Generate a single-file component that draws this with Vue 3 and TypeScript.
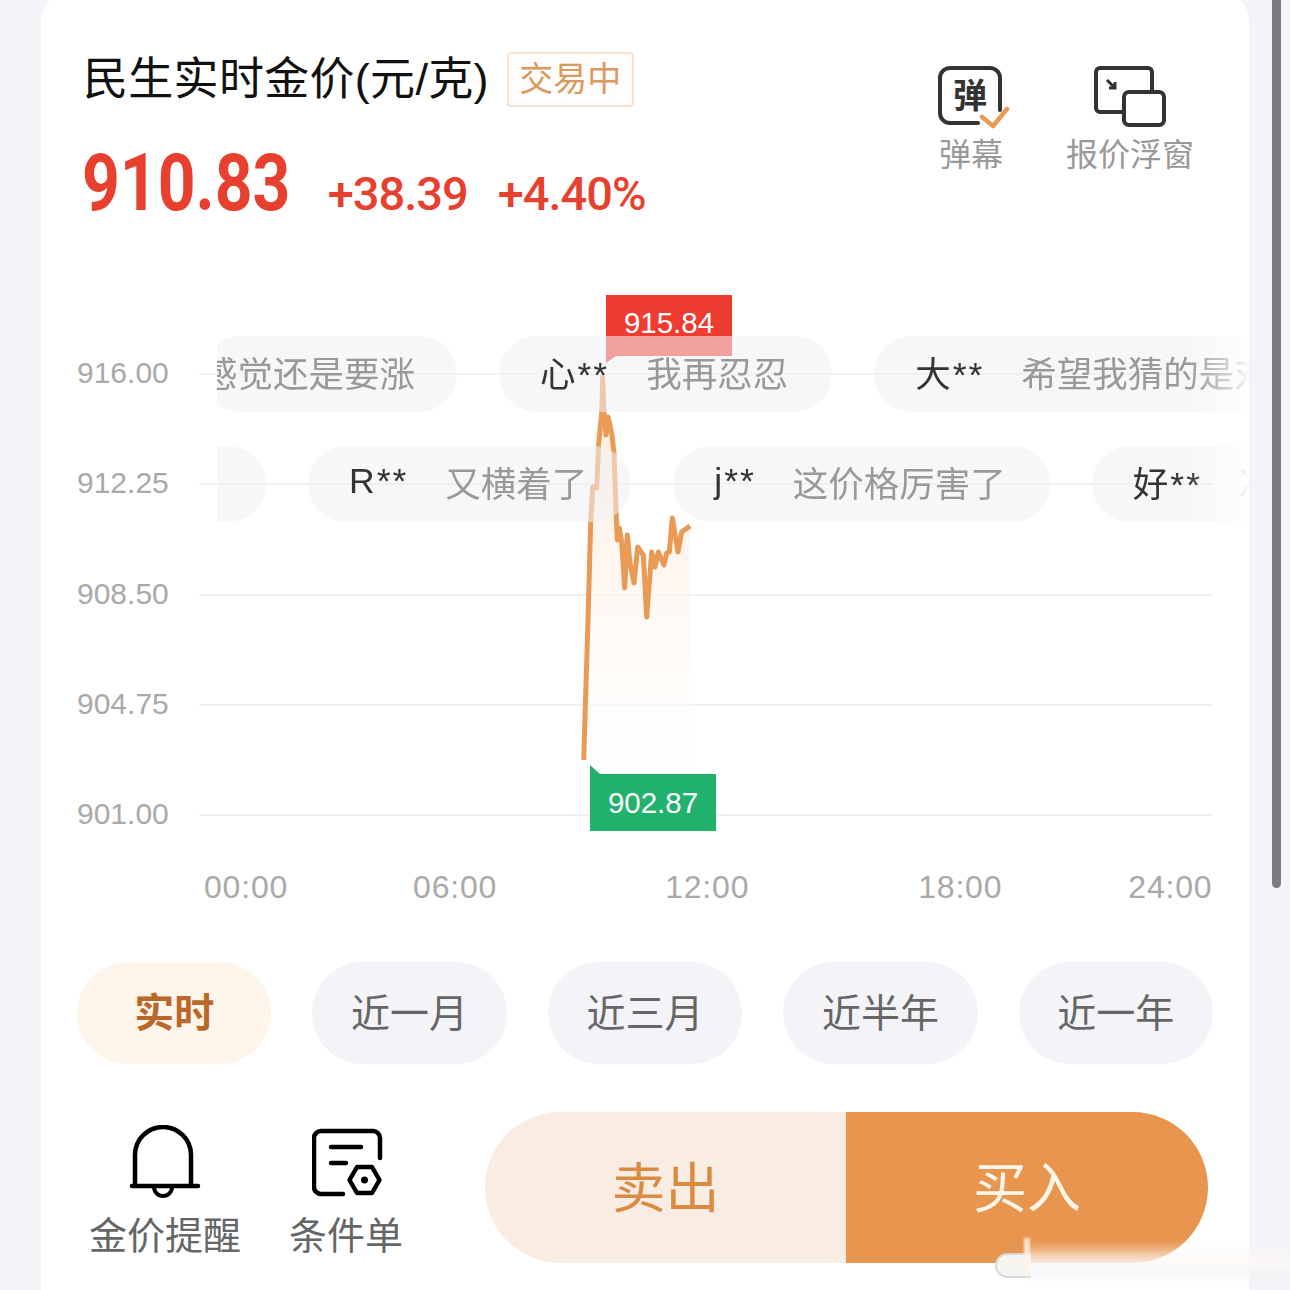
<template>
  <div class="page">
    <main class="card">
      <header class="header">
        <div class="header__left">
          <div class="title-row">
            <h1 class="title">民生实时金价(元/克)</h1>
            <span class="status">交易中</span>
          </div>
          <div class="price-row">
            <span class="price">910.83</span>
            <span class="delta delta--first">+38.39</span>
            <span class="delta">+4.40%</span>
          </div>
        </div>
        <div class="tools">
          <div class="tool tool--danmaku">
            <svg class="tool__icon" width="72" height="64" viewBox="0 0 72 64" fill="none">
              <path d="M40 57H12a10 10 0 0 1-10-10V12A10 10 0 0 1 12 2h40a10 10 0 0 1 10 10v32" stroke="#333" stroke-width="4" stroke-linecap="round" />
              <text x="32" y="42" text-anchor="middle" class="tool__glyph">弹</text>
              <path d="M44 51l11 9 14-17" stroke="#e99a55" stroke-width="4.5" stroke-linecap="round" stroke-linejoin="round" />
            </svg>
            <span class="tool__label">弹幕</span>
          </div>
          <div class="tool">
            <svg class="tool__icon" width="72" height="64" viewBox="0 0 72 64" fill="none">
              <path d="M28 46H6a4 4 0 0 1-4-4V6a4 4 0 0 1 4-4h48a4 4 0 0 1 4 4v20" stroke="#333" stroke-width="4" />
              <rect x="30" y="26" width="40" height="33" rx="5" stroke="#333" stroke-width="4" />
              <path d="M13 14l8 8M21 16v6h-6" stroke="#333" stroke-width="3" />
            </svg>
            <span class="tool__label">报价浮窗</span>
          </div>
        </div>
      </header>

      <section class="chart">
        <div v-for="label in yLabels" :key="label" class="chart__row">
          <span class="chart__label">{{ label }}</span>
          <span class="chart__line"></span>
        </div>

        <svg class="chart__plot" width="1208" height="600" viewBox="41 279 1208 600" fill="none">
          <defs>
            <linearGradient id="priceFill" x1="0" y1="0" x2="0" y2="1">
              <stop offset="0" stop-color="#fdeadb" />
              <stop offset="1" stop-color="#ffffff" stop-opacity="0.3" />
            </linearGradient>
          </defs>
          <polygon :points="areaPoints" fill="url(#priceFill)" />
          <polyline :points="linePoints" stroke="#e99a55" stroke-width="5" stroke-linejoin="round" />
        </svg>

        <span class="price-tag price-tag--high">915.84</span>
        <span class="price-tag price-tag--low">902.87</span>

        <div class="danmaku">
          <div v-for="(row, i) in danmakuRows" :key="i" class="danmaku__row" :style="{ marginLeft: row.offset + 'px' }">
            <div
              v-for="(item, j) in row.items"
              :key="j"
              class="danmaku__pill"
              :style="item.width ? { width: item.width + 'px' } : undefined"
            >
              <span v-if="item.name" class="danmaku__name">{{ item.name }}</span>
              <span v-if="item.text" class="danmaku__text">{{ item.text }}</span>
            </div>
          </div>
        </div>
      </section>

      <div class="x-axis">
        <span v-for="tick in xTicks" :key="tick" class="x-axis__tick">{{ tick }}</span>
      </div>

      <nav class="ranges">
        <button
          v-for="(range, i) in ranges"
          :key="range"
          class="ranges__item"
          :class="{ 'ranges__item--active': i === 0 }"
          type="button"
        >{{ range }}</button>
      </nav>

      <footer class="actions">
        <div class="action action--alert">
          <svg width="72" height="76" viewBox="0 0 72 76" fill="none">
            <path d="M6 60V30a28 28 0 0 1 56 0v30" stroke="#000" stroke-width="4.5" />
            <path d="M3 61h66" stroke="#000" stroke-width="4.5" stroke-linecap="round" />
            <path d="M25 62a9 9 0 0 0 18 0" stroke="#000" stroke-width="4" />
          </svg>
          <span class="action__label">金价提醒</span>
        </div>
        <div class="action action--order">
          <svg width="72" height="72" viewBox="0 0 72 72" fill="none">
            <path d="M31 66H9a7 7 0 0 1-7-7V10a7 7 0 0 1 7-7h52a7 7 0 0 1 7 7v20" stroke="#000" stroke-width="4.5" stroke-linecap="round" />
            <path d="M19 19h30M19 35h15" stroke="#000" stroke-width="4.5" stroke-linecap="round" />
            <path d="M37.500 52l7.500-13h15l7.500 13-7.500 13h-15z" stroke="#000" stroke-width="4.5" stroke-linejoin="round" />
            <circle cx="52.500" cy="52" r="3.500" fill="#000" />
          </svg>
          <span class="action__label">条件单</span>
        </div>
        <div class="trade">
          <button class="trade__btn trade__btn--sell" type="button">卖出</button>
          <button class="trade__btn trade__btn--buy" type="button">买入</button>
        </div>
      </footer>
    </main>

    <div class="scrollbar"></div>
    <div class="watermark">
      <span class="watermark__ring"></span>
      <span class="watermark__stick"></span>
      <span class="watermark__blur"></span>
    </div>
  </div>
</template>

<script setup lang="ts">
interface DanmakuItem {
  name?: string
  text?: string
  width?: number
}

const yLabels = ['916.00', '912.25', '908.50', '904.75', '901.00']
const xTicks = ['00:00', '06:00', '12:00', '18:00', '24:00']
const ranges = ['实时', '近一月', '近三月', '近半年', '近一年']

const danmakuRows: { offset: number; items: DanmakuItem[] }[] = [
  {
    offset: -15,
    items: [
      { text: '感觉还是要涨' },
      { name: '心**', text: '我再忍忍' },
      { name: '大**', text: '希望我猜的是对的呀' },
    ],
  },
  {
    offset: -51,
    items: [
      { width: 100 },
      { name: 'R**', text: '又横着了' },
      { name: 'j**', text: '这价格厉害了' },
      { name: '好**', text: '冲冲冲' },
    ],
  },
]

const line: [number, number][] = [
  [583.7, 760], [588, 620], [590.7, 523], [592.7, 487], [596.7, 488], [598.7, 443],
  [601.7, 413], [602.7, 377], [604, 413], [606, 435], [608, 417], [611.7, 433],
  [614, 453], [616, 510], [617.3, 540], [619.3, 528], [621.7, 542], [624.7, 588],
  [627.3, 535], [630, 563], [634, 583], [637.7, 547], [643.3, 555], [646.7, 617],
  [651.7, 552], [655, 567], [658.3, 552], [664, 565], [666.7, 553], [669.3, 552],
  [672.3, 518], [678, 552], [681.7, 532], [690, 526],
]

const linePoints = line.map(([x, y]) => `${x},${y}`).join(' ')
const areaPoints = `${linePoints} 690,815 583.7,815`
</script>

<style>
html,
body {
  margin: 0;
  background: #f3f3f8;
}
</style>

<style scoped>
.page {
  position: relative;
  width: 1290px;
  height: 1290px;
  overflow: hidden;
  background: #f3f3f8;
  font-family: "Liberation Sans", "Noto Sans CJK SC", sans-serif;
}
.card {
  box-sizing: border-box;
  width: 1208px;
  height: 1296px;
  margin: -6px 0 0 41px;
  background: #fff;
  border-radius: 26px 26px 0 0;
}

.header {
  box-sizing: border-box;
  display: flex;
  justify-content: space-between;
  height: 325px;
  padding: 58px 55px 0 44px;
}
.title-row {
  display: flex;
  align-items: center;
  gap: 18px;
}
.title {
  margin: 0 0 0 -2px;
  font-size: 45px;
  font-weight: 400;
  letter-spacing: 0.3px;
  line-height: 55px;
  color: #111;
}
.status {
  box-sizing: border-box;
  width: 127px;
  height: 55px;
  border: 2px solid #f7e2d0;
  border-radius: 4px;
  background: #fffdfb;
  font-size: 34px;
  line-height: 51px;
  text-align: center;
  color: #d9995f;
}
.price-row {
  display: flex;
  align-items: baseline;
  margin: 36px 0 0 -3px;
  color: #e8402f;
  font-family: "Roboto", sans-serif;
  font-weight: 500;
}
.price {
  display: inline-block;
  margin-right: -44px;
  font-size: 80px;
  font-weight: 700;
  line-height: 80px;
  transform: scaleX(0.825);
  transform-origin: left center;
}
.delta {
  margin-left: 30px;
  font-size: 47px;
  letter-spacing: -1px;
}
.delta--first {
  margin-left: 37px;
}

.tools {
  display: flex;
  gap: 56px;
  padding-top: 14px;
}
.tool {
  display: flex;
  flex-direction: column;
  align-items: center;
}
.tool__icon {
  display: block;
  height: 64px;
}
.tool--danmaku .tool__icon {
  margin-left: 2px;
}
.tool--danmaku .tool__label {
  margin-right: 4px;
}
.tool__glyph {
  font-family: "Noto Sans CJK SC", sans-serif;
  font-size: 34px;
  font-weight: 700;
  fill: #333;
}
.tool__label {
  margin-top: 2px;
  font-size: 32px;
  line-height: 46px;
  color: #999;
}

.chart {
  position: relative;
  padding: 0 36px;
}
.chart__row {
  display: flex;
  align-items: center;
  height: 110.25px;
}
.chart__label {
  position: relative;
  top: -1px;
  width: 122px;
  font-size: 30px;
  color: #a9a9a9;
}
.chart__line {
  flex: 1;
  height: 2px;
  background: #f1f1f1;
}
.chart__plot {
  position: absolute;
  left: 0;
  top: -40px;
}
.price-tag {
  position: absolute;
  box-sizing: border-box;
  width: 126px;
  color: #fff;
  font-size: 29.5px;
  text-align: center;
}
.price-tag--high {
  left: 565px;
  top: -24px;
  height: 68px;
  padding-top: 11px;
  line-height: 34px;
  background: #ef3b30;
  clip-path: polygon(0 0, 100% 0, 100% 61px, 10px 61px, 0 100%);
}
.price-tag--low {
  left: 549px;
  top: 446px;
  height: 66px;
  padding-top: 11px;
  line-height: 54px;
  background: #20b16d;
  clip-path: polygon(0 0, 10px 9px, 100% 9px, 100% 100%, 0 100%);
}

.danmaku {
  position: absolute;
  left: 176px;
  top: 17px;
  width: 1032px;
  display: flex;
  flex-direction: column;
  gap: 34px;
  overflow: hidden;
  -webkit-mask-image: linear-gradient(to right, #000 94%, rgba(0, 0, 0, 0.3) 99%, transparent 100%);
  mask-image: linear-gradient(to right, #000 94%, rgba(0, 0, 0, 0.3) 99%, transparent 100%);
}
.danmaku__row {
  display: flex;
  gap: 42px;
  height: 76px;
}
.danmaku__pill {
  flex: none;
  box-sizing: border-box;
  display: flex;
  align-items: center;
  gap: 37px;
  height: 76px;
  padding: 0 44px 6px 41px;
  border-radius: 38px;
  background: rgba(240, 240, 245, 0.56);
  font-size: 35.5px;
  white-space: nowrap;
}
.danmaku__row:first-child .danmaku__pill:first-child {
  padding-left: 0;
  padding-right: 42px;
}
.danmaku__name {
  color: #333;
  letter-spacing: 2px;
}
.danmaku__text {
  color: #999;
}

.x-axis {
  display: flex;
  height: 36px;
  margin-top: -1px;
  padding-left: 163px;
}
.x-axis__tick {
  font-size: 32px;
  letter-spacing: 0.8px;
  line-height: 36px;
  color: #a9a9a9;
}
.x-axis__tick:nth-child(2) {
  margin-left: 125px;
}
.x-axis__tick:nth-child(3) {
  margin-left: 168px;
}
.x-axis__tick:nth-child(4) {
  margin-left: 169px;
}
.x-axis__tick:nth-child(5) {
  margin-left: 126px;
}

.ranges {
  display: flex;
  gap: 41px;
  margin-top: 57px;
  padding: 0 36px;
}
.ranges__item {
  flex: 1;
  height: 102px;
  padding: 0 0 6px;
  border: 0;
  border-radius: 51px;
  background: #f3f3f8;
  font-family: inherit;
  font-size: 39px;
  color: #666;
}
.ranges__item--active {
  background: #fdf4ea;
  color: #b8682a;
  font-size: 40px;
  font-weight: 700;
}

.actions {
  display: flex;
  margin-top: 48px;
  padding-left: 44px;
}
.action {
  display: flex;
  flex-direction: column;
  align-items: center;
}
.action svg {
  display: block;
}
.action__label {
  margin-top: 11px;
  font-size: 38px;
  line-height: 48px;
  color: #666;
  white-space: nowrap;
}
.action--alert {
  box-sizing: border-box;
  width: 150px;
  padding: 13px 0 0 10px;
}
.action--order {
  width: 112px;
  margin-left: 55px;
  padding-top: 16px;
}
.action--order .action__label {
  margin-top: 12px;
}
.action--order svg {
  margin-left: 4px;
}
.trade {
  display: flex;
  width: 723px;
  height: 151px;
  margin-left: 83px;
  border-radius: 76px;
  overflow: hidden;
}
.trade__btn {
  border: 0;
  padding: 0 0 6px;
  font-family: inherit;
  font-size: 54px;
}
.trade__btn--sell {
  width: 361px;
  background: #f9ece3;
  color: #d98b42;
}
.trade__btn--buy {
  flex: 1;
  background: #e8954f;
  color: #fff6e8;
}

.scrollbar {
  position: absolute;
  top: 0;
  left: 1272px;
  width: 9px;
  height: 888px;
  border-radius: 0 0 5px 5px;
  background: #7b7b80;
}
.watermark {
  position: absolute;
  left: 995px;
  top: 1238px;
  width: 295px;
  height: 40px;
}
.watermark__ring {
  position: absolute;
  left: 0;
  top: 15px;
  width: 36px;
  height: 25px;
  box-sizing: border-box;
  border: 2px solid #d8d8d8;
  border-right: 0;
  border-radius: 13px 0 0 13px;
  background: #f7f5f2;
}
.watermark__stick {
  position: absolute;
  left: 29px;
  top: 0;
  width: 6px;
  height: 38px;
  background: rgba(255, 240, 225, 0.85);
  filter: blur(1px);
}
.watermark__blur {
  position: absolute;
  left: 32px;
  top: 4px;
  right: 0;
  bottom: 0;
  background: linear-gradient(to bottom, rgba(255, 255, 255, 0), rgba(252, 248, 245, 0.92) 60%, rgba(240, 240, 243, 0.6));
  filter: blur(3px);
}
</style>
